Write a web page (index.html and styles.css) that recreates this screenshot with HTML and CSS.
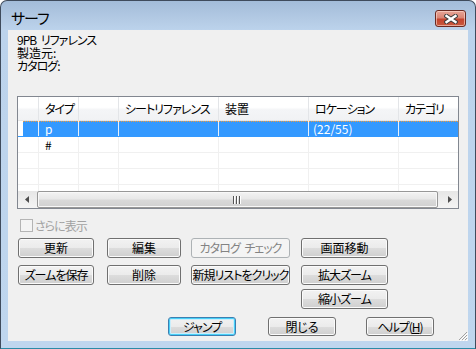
FILE: index.html
```html
<!DOCTYPE html>
<html lang="ja">
<head>
<meta charset="utf-8">
<title>サーフ</title>
<link rel="stylesheet" href="styles.css">
</head>
<body>
<div class="window">
  <div class="titlebar">
    <span class="title">サーフ</span>
    <div class="close">
      <svg width="14" height="10" viewBox="0 0 14 10">
        <path d="M2.5 2 L11.5 8 M11.5 2 L2.5 8" stroke="#3d3d3d" stroke-width="4.4" stroke-linecap="square"/>
        <path d="M2.5 2 L11.5 8 M11.5 2 L2.5 8" stroke="#ffffff" stroke-width="2.4" stroke-linecap="square"/>
      </svg>
    </div>
  </div>
  <div class="client">
    <div class="info">
      <div class="line kana">9PB リファレンス</div>
      <div class="line">製造元:</div>
      <div class="line kana">カタログ:</div>
    </div>
    <div class="list">
      <div class="lhead">
        <div class="c c0"></div>
        <div class="c c1">タイプ</div>
        <div class="c c2"></div>
        <div class="c c3">シートリファレンス</div>
        <div class="c c4">装置</div>
        <div class="c c5">ロケーション</div>
        <div class="c c6">カテゴリ</div>
      </div>
      <div class="lbody">
        <div class="row sel">
          <div class="c c0"><span class="selpad"></span></div>
          <div class="c c1">p</div>
          <div class="c c2"></div>
          <div class="c c3"></div>
          <div class="c c4"></div>
          <div class="c c5">(22/55)</div>
          <div class="c c6"></div>
        </div>
        <div class="row">
          <div class="c c0"></div>
          <div class="c c1">#</div>
          <div class="c c2"></div>
          <div class="c c3"></div>
          <div class="c c4"></div>
          <div class="c c5"></div>
          <div class="c c6"></div>
        </div>
        <div class="row">
          <div class="c c0"></div><div class="c c1"></div><div class="c c2"></div><div class="c c3"></div><div class="c c4"></div><div class="c c5"></div><div class="c c6"></div>
        </div>
        <div class="row">
          <div class="c c0"></div><div class="c c1"></div><div class="c c2"></div><div class="c c3"></div><div class="c c4"></div><div class="c c5"></div><div class="c c6"></div>
        </div>
        <div class="row">
          <div class="c c0"></div><div class="c c1"></div><div class="c c2"></div><div class="c c3"></div><div class="c c4"></div><div class="c c5"></div><div class="c c6"></div>
        </div>
      </div>
      <div class="hscroll">
        <div class="sarrow"><svg width="4" height="7" viewBox="0 0 4 7"><path d="M4 0 L0 3.5 L4 7 Z" fill="#4d4d4d"/></svg></div>
        <div class="thumb"><svg width="9" height="8" viewBox="0 0 9 8"><path d="M0.5 0 V8 M3.5 0 V8 M6.5 0 V8" stroke="#555" stroke-width="1"/><path d="M1.5 0 V8 M4.5 0 V8 M7.5 0 V8" stroke="#fff" stroke-width="1"/></svg></div>
        <div class="sarrow"><svg width="4" height="7" viewBox="0 0 4 7"><path d="M0 0 L4 3.5 L0 7 Z" fill="#4d4d4d"/></svg></div>
      </div>
    </div>
    <label class="check"><span class="box"></span><span class="kana">さらに表示</span></label>
    <div class="grid">
      <button class="btn b1">更新</button>
      <button class="btn b2">編集</button>
      <button class="btn b3 disabled kana">カタログ チェック</button>
      <button class="btn b4">画面移動</button>
      <button class="btn b1 kana">ズームを保存</button>
      <button class="btn b2">削除</button>
      <button class="btn b3 kana">新規リストをクリック</button>
      <button class="btn b4 kana">拡大ズーム</button>
      <button class="btn b4 col4 kana">縮小ズーム</button>
    </div>
    <div class="bottom">
      <button class="btn bb default kana">ジャンプ</button>
      <button class="btn bb close2">閉じる</button>
      <button class="btn bb help kana">ヘルプ(<u>H</u>)</button>
    </div>
    <svg class="grip" width="12" height="12" viewBox="0 0 12 12">
      <path d="M11 3 L3 11 M11 6 L6 11 M11 9 L9 11" stroke="#a0a0a0" stroke-width="1"/>
      <path d="M12 4 L4 12 M12 7 L7 12 M12 10 L10 12" stroke="#ffffff" stroke-width="1"/>
    </svg>
  </div>
</div>
</body>
</html>
```

FILE: styles.css
```css
* { box-sizing: border-box; }
html, body { margin: 0; padding: 0; }
body {
  width: 476px;
  height: 349px;
  overflow: hidden;
  background: #ffffff;
  font-family: "Noto Sans CJK JP", "Noto Sans", sans-serif;
  font-size: 12px;
  font-feature-settings: "palt" 1;
  color: #000;
}

.kana { letter-spacing: -1px; word-spacing: 3px; }

.window {
  width: 476px;
  height: 349px;
  border: 1px solid #3f4b5c;
  border-bottom-color: #2c8ba6;
  border-radius: 7px 7px 0 0;
  background: linear-gradient(180deg, #a3bcd9 0, #b3cae4 18px, #bcd3ec 29px, #bfd6ee 100%);
  display: flex;
  flex-direction: column;
}

.titlebar {
  height: 29px;
  flex: none;
  display: flex;
  align-items: flex-start;
  padding: 0 9px 0 10px;
}
.title {
  font-size: 15px;
  line-height: 16px;
  margin-top: 9px;
  letter-spacing: -1px;
}
.close {
  margin-left: auto;
  margin-top: 9px;
  width: 31px;
  height: 17px;
  border: 1px solid #6a2a22;
  border-radius: 3px;
  background: linear-gradient(180deg, #e8a597 0, #d98575 45%, #c4442f 55%, #c85a3f 100%);
  box-shadow: inset 0 0 0 1px rgba(255, 220, 210, 0.6);
  display: flex;
  align-items: center;
  justify-content: center;
}

.client {
  flex: 1;
  margin: 0 7px 7px;
  background: #f0f0f0;
  padding: 3px 9px 0 9px;
  position: relative;
}

.info {
  height: 63px;
  display: flex;
  flex-direction: column;
  align-items: flex-start;
}
.info .line {
  height: 13px;
  line-height: 13px;
}

.list {
  width: 442px;
  height: 113px;
  border: 1px solid #828790;
  background: #ffffff;
  display: flex;
  flex-direction: column;
  overflow: hidden;
}
.lhead {
  height: 24px;
  flex: none;
  display: flex;
  background: linear-gradient(180deg, #ffffff 0, #ffffff 45%, #f4f5f7 55%, #f1f2f4 100%);
  border-bottom: 1px solid #e5e5e5;
  letter-spacing: -1px;
}
.lhead .c {
  line-height: 24px;
  border-right: 1px solid #e3e5e8;
}
.lhead .c4 { letter-spacing: 0; }
.c {
  flex: none;
  padding-left: 6px;
  white-space: nowrap;
  overflow: hidden;
}
.c0 { width: 21px; padding-left: 0; }
.c1 { width: 40px; }
.c2 { width: 40px; }
.c3 { width: 100px; }
.c4 { width: 90px; }
.c5 { width: 90px; }
.c6 { width: 80px; }
.row .c5 { padding-left: 4px; }

.lbody {
  flex: 1;
  overflow: hidden;
}
.row {
  height: 16px;
  display: flex;
  border-bottom: 1px solid #f0f0f0;
  position: relative;
}
.row .c {
  line-height: 15px;
  border-right: 1px solid #f0f0f0;
}
.row.sel {
  border-bottom-color: #3399ff;
  color: #ffffff;
}
.row.sel .c {
  background: #3399ff;
  border-right-color: #e6f0fb;
}
.row.sel .c0 {
  background: transparent;
  display: flex;
}
.row.sel .c0 .selpad {
  margin-left: 5px;
  flex: 1;
  background: #3399ff;
}
.row.sel::after {
  content: "";
  position: absolute;
  left: 5px;
  right: 0;
  top: 0;
  border-top: 1px dotted #f09a3a;
}

.hscroll {
  height: 17px;
  flex: none;
  display: flex;
  align-items: stretch;
  background: linear-gradient(180deg, #e6e6e6 0, #f4f4f4 100%);
}
.sarrow {
  width: 17px;
  flex: none;
  display: flex;
  align-items: center;
  justify-content: center;
}
.thumb {
  flex: 1;
  margin: 0 3px 0 2px;
  border: 1px solid #979797;
  border-radius: 2px;
  background: linear-gradient(180deg, #f3f3f3 0, #e8e8e8 45%, #d9d9d9 55%, #d0d0d0 100%);
  box-shadow: inset 0 0 0 1px #f8f8f8;
  display: flex;
  align-items: center;
  justify-content: center;
}

.check {
  margin-top: 10px;
  height: 13px;
  display: flex;
  align-items: center;
  color: #a2a2a2;
  line-height: 13px;
}
.check .box {
  width: 13px;
  height: 13px;
  margin-left: 3px;
  margin-right: 2px;
  border: 1px solid #b4b4b4;
  background: #f4f4f4;
}

.btn {
  height: 20px;
  padding: 0;
  border: 1px solid #707070;
  border-radius: 3px;
  background: linear-gradient(180deg, #f2f2f2 0, #ebebeb 50%, #dddddd 50%, #cfcfcf 100%);
  box-shadow: inset 0 0 0 1px #fbfbfb;
  font-family: inherit;
  font-size: 12px;
  font-feature-settings: "palt" 1;
  color: #000;
  display: flex;
  align-items: center;
  justify-content: center;
  white-space: nowrap;
  overflow: hidden;
  line-height: 14px;
}
.btn.disabled {
  border-color: #adb2b5;
  background: #f4f4f4;
  box-shadow: none;
  color: #838383;
}
.btn.default {
  border-color: #3c7fb1;
  box-shadow: inset 0 0 0 1px #48d0f8, inset 0 0 0 2px #c9eefc;
}
.btn u { text-decoration: underline; }

.grid {
  margin-top: 6px;
  margin-left: 1px;
  display: grid;
  grid-template-columns: 89px 84px 110px 87px;
  grid-template-rows: 27px 24px 20px;
  align-items: start;
}
.b1 { width: 76px; }
.b2 { width: 74px; }
.b3 { width: 99px; }
.b4 { width: 87px; }
.col4 { grid-column: 4; }

.bottom {
  margin-top: 8px;
  display: flex;
  padding-left: 151px;
}
.bb { width: 68px; height: 19px; }
.close2 { margin-left: 32px; }
.help { margin-left: 30px; }

.grip {
  position: absolute;
  right: 0;
  bottom: 0;
}
```
